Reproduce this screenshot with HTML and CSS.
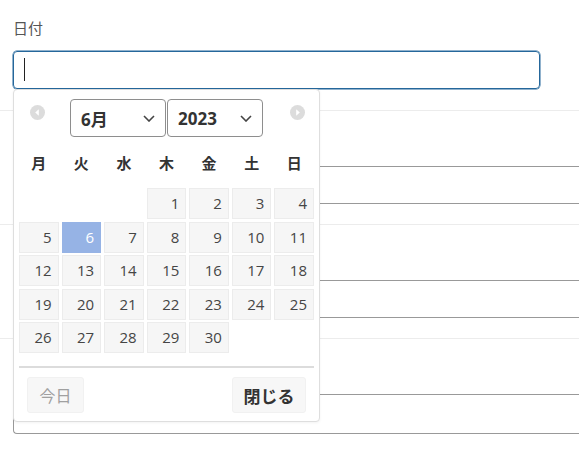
FILE: index.html
```html
<!DOCTYPE html>
<html lang="ja">
<head>
    <meta charset="UTF-8">
    <meta name="viewport" content="width=device-width, initial-scale=1.0">
    <title>日付選択</title>
    <link rel="stylesheet" href="styles.css">
</head>
<body>
    <form class="form">
        <div class="field first">
            <label class="label">日付</label>
            <div class="date-input focused"><span class="caret"></span></div>
        </div>
        <div class="field">
            <div class="label"></div>
            <div class="date-input wide"></div>
        </div>
        <div class="field">
            <div class="label"></div>
            <div class="date-input wide"></div>
        </div>
        <div class="field last">
            <div class="label"></div>
            <div class="date-input wide tall"></div>
        </div>
    </form>

    <div class="datepicker">
        <div class="dp-header">
            <span class="dp-nav prev">
                <svg width="15" height="15" viewBox="0 0 15 15"><circle cx="7.5" cy="7.5" r="7.5" fill="#dcdcdc"/><path d="M8.8 4.2 L5.2 7.5 L8.8 10.8 Z" fill="#fff"/></svg>
            </span>
            <div class="dp-selects">
                <div class="dp-select">
                    <span>6月</span>
                    <svg width="12" height="7" viewBox="0 0 12 7"><polyline points="1,1 6,6 11,1" fill="none" stroke="#444" stroke-width="1.6"/></svg>
                </div>
                <div class="dp-select">
                    <span>2023</span>
                    <svg width="12" height="7" viewBox="0 0 12 7"><polyline points="1,1 6,6 11,1" fill="none" stroke="#444" stroke-width="1.6"/></svg>
                </div>
            </div>
            <span class="dp-nav next">
                <svg width="15" height="15" viewBox="0 0 15 15"><circle cx="7.5" cy="7.5" r="7.5" fill="#dcdcdc"/><path d="M6.2 4.2 L9.8 7.5 L6.2 10.8 Z" fill="#fff"/></svg>
            </span>
        </div>

        <div class="dp-weekdays">
            <span>月</span><span>火</span><span>水</span><span>木</span><span>金</span><span>土</span><span>日</span>
        </div>

        <div class="dp-days">
            <span class="empty"></span><span class="empty"></span><span class="empty"></span>
            <span class="day">1</span><span class="day">2</span><span class="day">3</span><span class="day">4</span>
            <span class="day">5</span><span class="day selected">6</span><span class="day">7</span><span class="day">8</span><span class="day">9</span><span class="day">10</span><span class="day">11</span>
            <span class="day">12</span><span class="day">13</span><span class="day">14</span><span class="day">15</span><span class="day">16</span><span class="day">17</span><span class="day">18</span>
            <span class="day">19</span><span class="day">20</span><span class="day">21</span><span class="day">22</span><span class="day">23</span><span class="day">24</span><span class="day">25</span>
            <span class="day">26</span><span class="day">27</span><span class="day">28</span><span class="day">29</span><span class="day">30</span>
        </div>

        <div class="dp-footer">
            <button type="button" class="dp-btn today" disabled>今日</button>
            <button type="button" class="dp-btn close">閉じる</button>
        </div>
    </div>
</body>
</html>
```

FILE: styles.css
```css
body {
    margin: 0;
    padding: 0;
    font-family: "Open Sans", "Noto Sans CJK JP", sans-serif;
    color: #444;
    background: #fff;
    overflow: hidden;
    position: relative;
    width: 579px;
    height: 449px;
}

.form {
    padding: 0;
}

.field {
    padding: 21px 0 20px 13px;
    border-bottom: 1px solid #ececec;
}

.field.first {
    padding-top: 17px;
    padding-bottom: 21px;
}

.field.last {
    border-bottom: none;
}

.label {
    display: block;
    height: 22px;
    line-height: 22px;
    margin-bottom: 12px;
    font-size: 15px;
    color: #555;
}

.date-input {
    box-sizing: border-box;
    width: 527px;
    height: 38px;
    border: 1px solid #999;
    border-radius: 4px;
    position: relative;
}

.date-input.focused {
    border-color: #25679b;
    box-shadow: 0 0 0 0.5px #25679b;
}

.date-input.wide {
    width: 566px;
    border-right: none;
    border-radius: 4px 0 0 4px;
}

.date-input.tall {
    height: 40px;
}

.caret {
    position: absolute;
    left: 10px;
    top: 6px;
    width: 1px;
    height: 23px;
    background: #222;
}

/* datepicker popup */
.datepicker {
    position: absolute;
    left: 13px;
    top: 89px;
    box-sizing: border-box;
    width: 307px;
    height: 333px;
    padding: 9px 5px 0 5px;
    background: #fff;
    border: 1px solid #dedede;
    border-radius: 4px;
    box-shadow: 0 1px 3px rgba(0, 0, 0, 0.05);
}

.dp-header {
    display: flex;
    align-items: center;
    height: 38px;
    padding: 0 9px 0 11px;
}

.dp-nav {
    display: flex;
    width: 15px;
    height: 15px;
    margin-top: -12px;
}

.dp-nav.next {
    margin-left: auto;
}

.dp-selects {
    display: flex;
    gap: 1px;
    margin-left: 25px;
}

.dp-select {
    box-sizing: border-box;
    display: flex;
    align-items: center;
    justify-content: space-between;
    width: 96px;
    height: 38px;
    padding: 0 10px 0 10px;
    border: 1px solid #8e8e8e;
    border-radius: 4px;
    font-size: 17px;
    font-weight: bold;
    color: #333;
}

.dp-weekdays {
    display: grid;
    grid-template-columns: repeat(7, 1fr);
    column-gap: 3px;
    width: 295px;
    margin-top: 13px;
    height: 26px;
    line-height: 26px;
    font-size: 15px;
    font-weight: bold;
    text-align: center;
    color: #333;
}

.dp-days {
    display: grid;
    grid-template-columns: repeat(7, 1fr);
    grid-auto-rows: 31px;
    column-gap: 3px;
    row-gap: 2.6px;
    width: 295px;
    margin-top: 12px;
}

.day {
    box-sizing: border-box;
    border: 1px solid #ececec;
    background: #f6f6f6;
    text-align: right;
    padding-right: 6px;
    font-size: 15px;
    line-height: 29px;
    color: #454545;
}

.day.selected {
    background: #96b3e5;
    border-color: #96b3e5;
    color: #fff;
}

.dp-footer {
    display: flex;
    justify-content: space-between;
    margin-top: 13px;
    padding: 9px 8px 0 8px;
    border-top: 2px solid #dcdcdc;
}

.dp-btn {
    height: 36px;
    padding: 0 10px;
    border: 1px solid #f1f1f1;
    border-radius: 3px;
    background: #f7f7f7;
    font-family: "Open Sans", "Noto Sans CJK JP", sans-serif;
    font-size: 16px;
}

.dp-btn.today {
    color: #a0a0a0;
    width: 57px;
}

.dp-btn.close {
    color: #333;
    font-weight: bold;
    font-size: 17px;
    width: 74px;
}
```
